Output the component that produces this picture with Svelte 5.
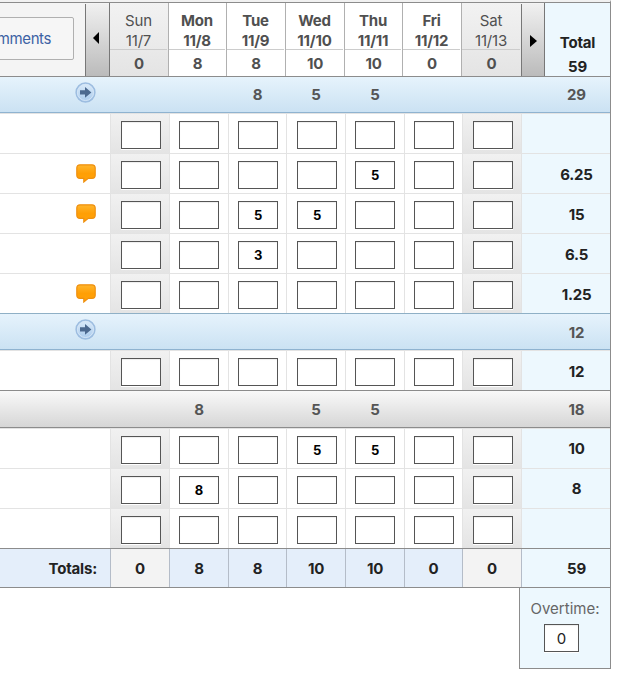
<script>
  const days = [
    { name: 'Sun', date: '11/7', total: 0, off: true, w: 59 },
    { name: 'Mon', date: '11/8', total: 8, w: 58, inset: 9 },
    { name: 'Tue', date: '11/9', total: 8, w: 59, inset: 9 },
    { name: 'Wed', date: '11/10', total: 10, w: 59 },
    { name: 'Thu', date: '11/11', total: 10, w: 58, inset: 9 },
    { name: 'Fri', date: '11/12', total: 0, w: 59, inset: 9 },
    { name: 'Sat', date: '11/13', total: 0, off: true, w: 60 }
  ];
  const groups = [
    {
      tone: 'blue', arrow: true, hours: ['', '', 8, 5, 5, '', ''], total: 29,
      rows: [
        { hours: ['', '', '', '', '', '', ''], total: '' },
        { note: true, hours: ['', '', '', '', 5, '', ''], total: '6.25' },
        { note: true, hours: ['', '', 5, 5, '', '', ''], total: '15' },
        { hours: ['', '', 3, '', '', '', ''], total: '6.5' },
        { note: true, hours: ['', '', '', '', '', '', ''], total: '1.25' }
      ]
    },
    {
      tone: 'blue', arrow: true, hours: ['', '', '', '', '', '', ''], total: 12,
      rows: [{ hours: ['', '', '', '', '', '', ''], total: '12' }]
    },
    {
      tone: 'gray', hours: ['', 8, '', 5, 5, '', ''], total: 18,
      rows: [
        { hours: ['', '', '', 5, 5, '', ''], total: '10' },
        { hours: ['', 8, '', '', '', '', ''], total: '8' },
        { hours: ['', '', '', '', '', '', ''], total: '' }
      ]
    }
  ];
  // border colour of the row that closes each group
  const closing = ['#8fb0c6', '#8c8c8c', '#8c8c8c'];
</script>

<div class="sheet">
  <header class="head">
    <div class="tools"><button class="comments">Comments</button></div>
    <button class="nav prev" aria-label="Previous week">
      <svg width="6" height="12" viewBox="0 0 6 12"><path d="M6 0V12L0 6Z" /></svg>
    </button>
    {#each days as d}
      <div class="day" class:off={d.off} style="width:{d.w}px">
        <div class="name"><span>{d.name}</span><span>{d.date}</span></div>
        <div class="sum">{d.total}</div>
      </div>
    {/each}
    <button class="nav next" aria-label="Next week">
      <svg width="7" height="12" viewBox="0 0 7 12"><path d="M0 0V12L7 6Z" /></svg>
    </button>
    <div class="grand"><span>Total</span><span>59</span></div>
  </header>

  {#each groups as g, gi}
    <div class="group {g.tone}">
      <div class="lead">
        {#if g.arrow}
          <svg class="go" width="21" height="21" viewBox="0 0 21 21">
            <defs>
              <linearGradient id="disc{gi}" x1="0" y1="0" x2="0" y2="1">
                <stop offset="0" stop-color="#dcecfa" /><stop offset="1" stop-color="#a9caec" />
              </linearGradient>
            </defs>
            <circle cx="10.5" cy="10.5" r="9.4" fill="url(#disc{gi})" stroke="#9dbde0" stroke-width="1.5" />
            <circle cx="10.5" cy="10.5" r="8" fill="none" stroke="#d4e5f6" stroke-width="1" />
            <path d="M5 8.2H10V5.1L16.4 10.4L10 15.7V12.6H5Z" fill="#4c698f" />
          </svg>
        {/if}
      </div>
      {#each g.hours as h}<div class="cell">{h}</div>{/each}
      <div class="total">{g.total}</div>
    </div>
    <div class="rows">
      {#each g.rows as r, ri}
        <div class="row" style="border-color:{ri === g.rows.length - 1 ? closing[gi] : '#e3e3e3'}">
          <div class="lead">
            {#if r.note}
              <svg class="note" width="20" height="19" viewBox="0 0 20 19">
                <defs>
                  <linearGradient id="n{gi}{ri}" x1="0" y1="0" x2="0" y2="1">
                    <stop offset="0" stop-color="#ffb62e" /><stop offset=".5" stop-color="#ff9f05" /><stop offset="1" stop-color="#ffa20a" />
                  </linearGradient>
                </defs>
                <path d="M4 .8H16Q19.2 .8 19.2 4V11.2Q19.2 14.3 16 14.3H12.3L7.8 18V14.3H4Q.8 14.3 .8 11.2V4Q.8 .8 4 .8Z" fill="url(#n{gi}{ri})" stroke="#ef900f" stroke-width="1.2" />
              </svg>
            {/if}
          </div>
          {#each r.hours as h, i}
            <div class="cell" class:off={days[i].off} class:tight={days[i].inset}><span class="box">{h}</span></div>
          {/each}
          <div class="total">{r.total}</div>
        </div>
      {/each}
    </div>
  {/each}

  <div class="totals">
    <div class="lead">Totals:</div>
    {#each days as d}<div class="cell" class:off={d.off}>{d.total}</div>{/each}
    <div class="total">59</div>
  </div>
</div>
<div class="overtime"><span>Overtime:</span><div class="box">0</div></div>

<style>
  :global(body) { background: #fff; overflow: hidden; }
  .sheet, .overtime {
    box-sizing: border-box;
    font: 650 15px/20px Inter, 'Open Sans', sans-serif;
    letter-spacing: -0.2px;
    color: #222;
  }
  .sheet *, .overtime * { box-sizing: border-box; }
  button { font: inherit; letter-spacing: inherit; padding: 0; margin: 0; }
  .sheet { width: 611px; border-top: 2px solid #f1f1f1; border-right: 1px solid #8c8c8c; }
  .head {
    display: flex;
    height: 75px;
    border-top: 1px solid #8c8c8c;
    border-bottom: 1px solid #8c8c8c;
    background: #f4f4f4;
  }
  .tools { width: 85px; display: flex; justify-content: flex-end; padding: 14px 11px 0 0; }
  .comments {
    flex: none;
    width: 116px;
    height: 43px;
    padding-right: 22px;
    text-align: right;
    border: 1px solid #b0b0b0;
    border-radius: 2px;
    background: #f6f6f6;
    color: #3c62a4;
    font-weight: 400;
    letter-spacing: -0.4px;
  }
  .nav {
    display: flex;
    align-items: center;
    margin-top: 1px;
    border: 0;
    border-left: 1px solid #777;
    background: linear-gradient(#f0f0f0, #bbb);
  }
  .prev { width: 24px; padding: 0 0 4px 7px; }
  .next { width: 23px; padding: 1px 0 0 8px; }
  .day { border-left: 1px solid #b0b0b0; background: #fff; color: #505050; text-align: center; }
  .prev + .day { border-left-color: #777; }
  .day.off { background: linear-gradient(#f2f2f2, #e4e4e4); }
  .name {
    height: 47px;
    margin-right: 1px;
    padding-top: 8px;
    border-bottom: 1px solid #ccc;
    display: flex;
    flex-direction: column;
  }
  .off .name { font-weight: 400; }
  .sum { padding-top: 4px; }
  .grand {
    flex: 1;
    border-left: 1px solid #777;
    background: #edf8fe;
    display: flex;
    flex-direction: column;
    align-items: center;
    padding-top: 28px;
    line-height: 23.5px;
  }
  .group, .row, .totals {
    display: grid;
    grid-template-columns: 110px 59px 59px 58px 59px 59px 58px 59px 1fr;
    grid-template-rows: 100%;
  }
  .group { height: 36px; color: #555; line-height: 35px; }
  .rows + .blue { line-height: 37px; }
  .blue { background: linear-gradient(#e6f3fc, #cbe2f3); border-bottom: 1px solid #8fb3d0; }
  .gray { height: 37px; background: linear-gradient(#f9f9f9, #d6d6d6); border-bottom: 1px solid #8c8c8c; line-height: 37px; }
  .group .cell, .totals .cell { text-align: center; padding-left: 1px; }
  .go { display: block; margin: 5px 0 0 75px; }
  .total { padding-left: 22px; text-align: center; }
  .rows { border-top: 1px solid #e3e3e3; }
  .row { height: 40px; border-bottom: 1px solid; }
  .row .cell { border-left: 1px solid #e3e3e3; padding: 7px 0 0 10px; }
  .row .cell.tight { padding-left: 9px; }
  .row .cell.off { background: linear-gradient(#f1f1f1, #e4e4e4); }
  .row .total { border-left: 1px solid #e3e3e3; background: #edf8fe; line-height: 41px; padding-left: 21px; }
  .gray + .rows .total { line-height: 39px; }
  .note { display: block; margin: 10px 0 0 76px; }
  .box {
    display: block;
    width: 40px;
    height: 28px;
    border: 1px solid #555;
    background: #fff;
    box-shadow: inset 0 1px 1px #eee, 0 1px #fff;
    color: #000;
    text-align: center;
    font-size: 13px;
    font-weight: 700;
    line-height: 27px;
  }
  .totals { height: 39px; border-bottom: 1px solid #8c8c8c; background: #e4eefa; line-height: 39px; }
  .totals .lead { text-align: right; padding-right: 13px; }
  .totals .cell { border-left: 1px solid #b4bcc8; padding-left: 0; }
  .totals .cell.off { background: #f3f3f3; }
  .totals .total { border-left: 1px solid #b4bcc8; background: #edf8fe; padding-left: 21px; }
  .overtime {
    width: 92px;
    height: 81px;
    margin-left: 519px;
    border: 1px solid #8c8c8c;
    border-top: 0;
    background: #edf8fe;
    color: #666;
    font-weight: 400;
    letter-spacing: 0;
    text-align: center;
    padding-top: 11px;
  }
  .overtime .box { width: 35px; margin: 5px 0 0 24px; font-size: 15px; font-weight: 400; color: #222; }
</style>
